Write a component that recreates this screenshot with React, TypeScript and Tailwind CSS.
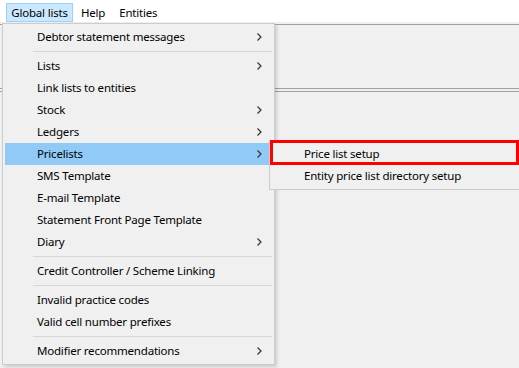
import React from "react";

const Chevron = () => (
  <svg width="5" height="8" viewBox="0 0 5 8" className="block">
    <path d="M0.5 0.5 L4 4 L0.5 7.5" fill="none" stroke="#333333" strokeWidth="1.2" />
  </svg>
);

type Entry = { label: string; sub?: boolean; hl?: boolean } | "sep";

const items: Entry[] = [
  { label: "Debtor statement messages", sub: true },
  "sep",
  { label: "Lists", sub: true },
  { label: "Link lists to entities" },
  { label: "Stock", sub: true },
  { label: "Ledgers", sub: true },
  { label: "Pricelists", sub: true, hl: true },
  { label: "SMS Template" },
  { label: "E-mail Template" },
  { label: "Statement Front Page Template" },
  { label: "Diary", sub: true },
  "sep",
  { label: "Credit Controller / Scheme Linking" },
  "sep",
  { label: "Invalid practice codes" },
  { label: "Valid cell number prefixes" },
  "sep",
  { label: "Modifier recommendations", sub: true },
];

export default function App() {
  return (
    <div
      className="relative w-[519px] h-[368px] overflow-hidden bg-[#f0f0f0] text-[11.5px] tracking-[-0.2px] text-black"
      style={{ fontFamily: '"Noto Sans", "Open Sans", sans-serif' }}
    >
      {/* menubar */}
      <div className="h-[22px] bg-white flex items-end pl-[6px]">
        <div className="w-[67px] h-[19px] flex items-center justify-center bg-[#cce8ff] border border-[#99d1ff] leading-none">
          Global lists
        </div>
        <div className="h-[19px] flex items-center pl-[8px] pr-[12px] leading-none">Help</div>
        <div className="h-[19px] flex items-center px-[2px] leading-none">Entities</div>
      </div>
      {/* background content */}
      <div className="h-[2px]" />
      <div className="border-t border-[#a0a0a0] h-[64px]" />
      <div className="border-t border-b border-[#a0a0a0] h-[4px] bg-[#f0f0f0]" />

      {/* dropdown */}
      <div className="absolute left-[2px] top-[23px] w-[273px] border border-[#cccccc] bg-[#f0f0f0] p-[2px] shadow-[2px_2px_3px_rgba(0,0,0,0.15)]">
        {items.map((it, i) =>
          it === "sep" ? (
            <div key={i} className="h-[7px] flex items-center pl-[28px]">
              <div className="h-px w-full bg-[#d7d7d7]" />
            </div>
          ) : (
            <div
              key={i}
              className={`h-[22px] flex items-center pl-[32px] pr-[10px] ${it.hl ? "bg-[#91c9f7]" : ""}`}
            >
              <span className="flex-1 leading-none whitespace-nowrap">{it.label}</span>
              {it.sub && <Chevron />}
            </div>
          )
        )}
      </div>

      {/* submenu */}
      <div className="absolute left-[269px] top-[140px] w-[270px] border border-[#cccccc] bg-[#f0f0f0] p-[2px]">
        <div className="h-[22px] flex items-center pl-[32px] leading-none whitespace-nowrap">Price list setup</div>
        <div className="h-[22px] flex items-center pl-[32px] leading-none whitespace-nowrap">
          Entity price list directory setup
        </div>
      </div>
      {/* red annotation */}
      <div className="absolute left-[270px] top-[140px] w-[249px] h-[25px] border-[3px] border-[#ff0000]" />
    </div>
  );
}
